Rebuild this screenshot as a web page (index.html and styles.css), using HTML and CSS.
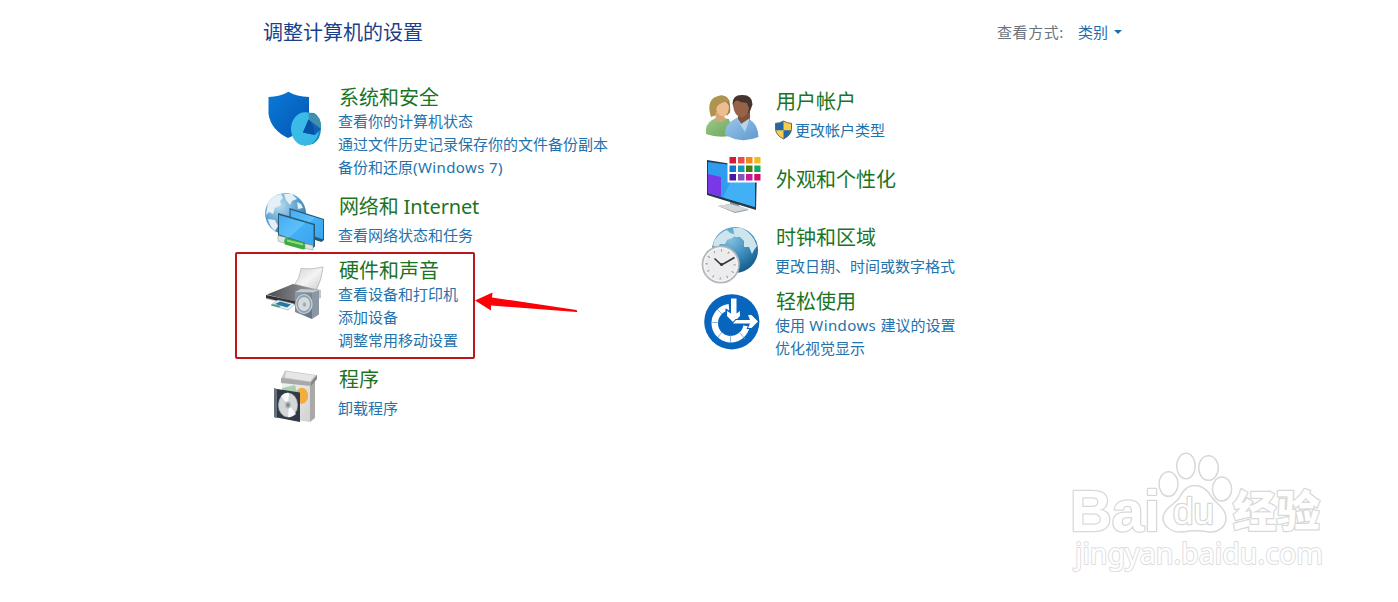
FILE: index.html
```html
<!DOCTYPE html>
<html lang="zh-CN">
<head>
<meta charset="utf-8">
<title>控制面板</title>
<link rel="stylesheet" href="styles.css">
</head>
<body>
<main class="panel">
  <header class="panel-head">
    <h1 class="title">调整计算机的设置</h1>
    <div class="view"><span class="view-label">查看方式:</span><a class="view-value">类别</a><i class="caret"></i></div>
  </header>
  <div class="columns">
    <div class="column column-left">
      <section class="item item-tall">
        <svg class="icon" viewBox="262 84 64 64">
          <defs>
            <linearGradient id="shield" x1="0" y1="0" x2="1" y2="1"><stop offset="0" stop-color="#087bd5"/><stop offset="1" stop-color="#0654b5"/></linearGradient>
            <linearGradient id="pie" x1="0" y1="0" x2="1" y2="1"><stop offset="0" stop-color="#3cbce9"/><stop offset="1" stop-color="#35b6e3"/></linearGradient>
          </defs>
          <path d="M268.500 97q12-.5 20-5.300q8 5 20.500 5.300v16q-1 17-21 25q-17-8-19.500-24z" fill="url(#shield)"/>
          <path d="M306 112.500l8 .5q7 3.500 7 15t-8 16l-9 1.500z" fill="#168bbb"/>
          <ellipse cx="305" cy="129" rx="14" ry="16.700" fill="url(#pie)"/>
          <path d="M308.500 112.800q9 1 12 9l.5 8-12-8.500z" fill="#3f8fae"/>
          <path d="M308.500 119.500l-5.500 13 12 2.500 6-6z" fill="#0f62b0"/>
          <path d="M308.500 119.500l-5.500 13 11 2.300q1-9-5.500-15.300z" fill="#0751a9"/>
        </svg>
        <div class="text"><h2>系统和安全</h2><a>查看你的计算机状态</a><a>通过文件历史记录保存你的文件备份副本</a><a>备份和还原<span class="latin">(Windows 7)</span></a></div>
      </section>
      <section class="item item-net">
        <svg class="icon" viewBox="262 193 64 64">
          <defs>
            <radialGradient id="globe" cx=".35" cy=".3" r=".8"><stop offset="0" stop-color="#b9dcef"/><stop offset=".5" stop-color="#65a8d3"/><stop offset="1" stop-color="#226ea9"/></radialGradient>
            <linearGradient id="screen" x1="0" y1="0" x2="1" y2="1"><stop offset="0" stop-color="#45adf1"/><stop offset=".5" stop-color="#5cc0fa"/><stop offset=".52" stop-color="#43aff4"/><stop offset="1" stop-color="#3aa6f0"/></linearGradient>
          </defs>
          <circle cx="285.500" cy="213.500" r="20.500" fill="url(#globe)"/>
          <g fill="#e4f0f5"><path d="M268 203q5-8 13-9l2 4-3 3 1 4-6 3-2 6-4-2-3 3z"/><path d="M284 194l8 0 5 5-5 2-2 4-4-5z"/><path d="M268 219l7 1 3 6-3 5q-6-5-7-12z"/><path d="M297 202l4 2 2 4-5 1z"/></g>
          <path d="M289.500 208l34.500 11v21l-2.500 2-32-10z" fill="#2a5877"/>
          <path d="M290.500 209.800l32.500 10v19.500l-32-10z" fill="url(#screen)"/>
          <path d="M278 213l37 11v22.500l-2 1.500-35-12z" fill="#2a5877"/>
          <path d="M279 215l34.500 10v20.500l-34.500-11z" fill="url(#screen)"/>
          <path d="M278 235.500l10 2.500 0 6.500-10-3.500z" fill="#dce5e2" stroke="#96a49c" stroke-width=".6"/>
          <path d="M286 237.500l18 5q3 3 1 6.500l-2 .5-18-5q-2-4 1-7z" fill="#3eaa45"/>
          <path d="M287 239.500l16 4v2l-16-4z" fill="#91df7c"/>
          <path d="M305 243.500l8 2v4.500l-8-1.500z" fill="#dce5e2" stroke="#96a49c" stroke-width=".6"/>
        </svg>
        <div class="text text-wide"><h2>网络和 Internet</h2><a>查看网络状态和任务</a></div>
      </section>
      <section class="item item-tall">
        <svg class="icon" viewBox="262 257 64 64">
          <defs>
            <linearGradient id="paper" x1="0" y1="0" x2="1" y2="1"><stop offset="0" stop-color="#d2d3d5"/><stop offset=".5" stop-color="#f4f4f4"/><stop offset="1" stop-color="#c8c9cb"/></linearGradient>
            <linearGradient id="body" x1="0" y1="0" x2="1" y2="0"><stop offset="0" stop-color="#4a4c50"/><stop offset=".5" stop-color="#77797d"/><stop offset="1" stop-color="#a2a4a7"/></linearGradient>
            <linearGradient id="speaker" x1="0" y1="0" x2="1" y2="1"><stop offset="0" stop-color="#8d9dac"/><stop offset="1" stop-color="#5e7082"/></linearGradient>
          </defs>
          <path d="M301 268.500q11 1.500 22-1.500-1 12-7 24l-21-7q5-6 6-15.500z" fill="url(#paper)" stroke="#b4b5b8" stroke-width=".8"/>
          <path d="M266 296l27-12 28 6v8l-24 8-31-7z" fill="#c3c5c8"/>
          <path d="M267 294.500l26-10.500 26 6-22 12z" fill="url(#body)"/>
          <path d="M266 295l30 6.500v3.500l-30-7z" fill="#303237"/>
          <path d="M278 300l17 4-7 6-17-5z" fill="#edf5f7" stroke="#8093a1" stroke-width=".5"/>
          <path d="M280 301.500l11 3-4 3-12-3.500z" fill="#2778a9"/><path d="M273 304l8 2-2 1.500-8-2z" fill="#46a477"/>
          <path d="M295 292h18l-1 27-17-7z" fill="url(#speaker)"/>
          <path d="M312 292l7-2v24.500l-7 4.500z" fill="#8b98a4"/><path d="M295 292l6-3 18 1-6 2.500z" fill="#c3cbd2"/>
          <ellipse cx="304" cy="304" rx="8" ry="9.500" fill="#8e9fab" stroke="#cbd3d7" stroke-width="1.200"/>
          <ellipse cx="304" cy="304" rx="6" ry="7" fill="#d5dadc"/><ellipse cx="304.500" cy="304.500" rx="1.700" ry="2.200" fill="#a0adb5"/>
        </svg>
        <div class="text"><h2>硬件和声音</h2><a>查看设备和打印机</a><a>添加设备</a><a>调整常用移动设置</a></div>
      </section>
      <section class="item">
        <svg class="icon" viewBox="262 366 64 64">
          <defs><linearGradient id="box" x1="0" y1="0" x2="1" y2="1"><stop offset="0" stop-color="#f2f2f2"/><stop offset="1" stop-color="#d2d1d0"/></linearGradient></defs>
          <path d="M282 382l28 3v37l-28-4z" fill="url(#box)"/>
          <path d="M310 385l5-7v40l-5 4z" fill="#aaa9a8"/>
          <path d="M281 379l4-8.500 31 4.500-5 9z" fill="#c6c6c7"/><path d="M286 371.500l29 4-5 6-25-4z" fill="#e6e6e6"/>
          <path d="M281 378l30 4v4l-30-3z" fill="#a9a9aa"/><path d="M311 382l6-7.500v4.500l-6 7z" fill="#858586"/>
          <path d="M282 388l13-3 4 15-2 19-14-5z" fill="#a9ceb2"/>
          <ellipse cx="301.800" cy="395.800" rx="6.300" ry="8" fill="#f3ac3f"/>
          <path d="M274 388.500l26 4v29.500l-26-5z" fill="#303945"/><path d="M274 388.500l3 .5v29l-3-1z" fill="#66717b"/>
          <ellipse cx="288" cy="405" rx="9.600" ry="12" fill="#d3d7d8" stroke="#a8b0b4" stroke-width=".6"/>
          <path d="M288 405l-7-9q4-4 8-3zM289 405l7 9q-4 4-8 3z" fill="#fff" opacity=".85"/>
          <ellipse cx="288" cy="405" rx="2.800" ry="3.400" fill="#a9b1b4"/><ellipse cx="288" cy="405" rx="1.200" ry="1.500" fill="#6f7b82"/>
        </svg>
        <div class="text text-wide"><h2>程序</h2><a>卸载程序</a></div>
      </section>
    </div>
    <div class="column column-right">
      <section class="item item-user">
        <svg class="icon" viewBox="700 88 64 64">
          <defs>
            <linearGradient id="green" x1="0" y1="0" x2="1" y2="1"><stop offset="0" stop-color="#a0ca80"/><stop offset="1" stop-color="#67a565"/></linearGradient>
            <linearGradient id="blue" x1="0" y1="0" x2="1" y2="1"><stop offset="0" stop-color="#9dc9eb"/><stop offset="1" stop-color="#5f99ce"/></linearGradient>
          </defs>
          <path d="M706 134q-1-10 6-14l6-3 11 2 5 16q-14 4-28-1z" fill="url(#green)"/>
          <path d="M712 116q-1-20 10-20.500q9.500 1 8 17l-3 3-6-2z" fill="#98803f"/>
          <path d="M715 112h9l1 8q-4 4-9 0z" fill="#d8a574"/>
          <path d="M715 107q1-6 8-7 6 3 6 8-1 8-6 8.500-6-1-8-9.500z" fill="#edbd91"/>
          <path d="M711 117q-6-19 9-21.500 7-1 10 6-9 0-13 5l-2 9z" fill="#af9450"/>
          <path d="M725 135q0-11 8-15l7-4 9 3q9 5 9.500 18q-12 5-24 2z" fill="url(#blue)"/>
          <path d="M738 112h12v8l-8 5-4-6z" fill="#805238"/>
          <path d="M732.500 104q0-9 9-9q11-.5 11 9.500l-3 8-12 2z" fill="#47352d"/>
          <path d="M733 105q1-4 4-4.500 4 2 10 2.500l2 5q-1 8-7 9.500q-8-1-9-12.500z" fill="#966248"/>
          <path d="M737 119l4 5 9-6-5 14z" fill="#b3d5ee"/>
        </svg>
        <div class="text text-wide"><h2>用户帐户</h2><a class="shielded"><svg class="shield" viewBox="0 0 19 20"><path d="M9.500 1q4 2.500 8 2.300v6q-.5 6-8 9.700q-7.500-3.700-8-9.700v-6q4 .2 8-2.300z" fill="#f9cd47"/><path d="M9.500 1q-4 2.500-8 2.300v6l.2 1h7.800zM9.500 10.300h7.800q-1 5.700-7.800 8.700z" fill="#2369aa"/><path d="M9.500 1q4 2.500 8 2.300v6q-.5 6-8 9.700q-7.500-3.700-8-9.700v-6q4 .2 8-2.300z" fill="none" stroke="#6a6a60"/></svg>更改帐户类型</a></div>
      </section>
      <section class="item item-look">
        <svg class="icon" viewBox="700 167 64 64">
          <path d="M718 206l12-2v-5l9 3v4l10 4-14 3z" fill="#8f989f"/><path d="M718 206l12-2 19 5-14 3z" fill="#d4d8db"/>
          <path d="M707 160l50 8-1 42-49-15z" fill="#263a49"/>
          <path d="M708 162l47 6v39l-47-14z" fill="#2f9cef"/><path d="M738 166l17 2v39l-32-9.500z" fill="#42b0f5"/>
          <path d="M708 174l13 3v19.500l-13-3.500z" fill="#7937e8"/>
          <path d="M727.500 155h34.500v27.500h-34.500z" fill="#fff"/>
          <g><path d="M729.500 157h6.500v6.500h-6.500z" fill="#d11d36"/><path d="M738 157h6.500v6.500H738z" fill="#e74c50"/><path d="M746 157h6.500v6.500H746z" fill="#ee891c"/><path d="M754.300 157h6.200v6.500h-6.200z" fill="#f3bc19"/><path d="M729.500 165.500h6.500v6.500h-6.500z" fill="#0e78cf"/><path d="M738 165.500h6.500v6.500H738z" fill="#1797b3"/><path d="M746 165.500h6.500v6.500H746z" fill="#477d0b"/><path d="M754.300 165.500h6.200v6.500h-6.200z" fill="#13a866"/><path d="M729.500 174h6.500v6.500h-6.500z" fill="#4d16a0"/><path d="M738 174h6.500v6.500H738z" fill="#8455bd"/><path d="M746 174h6.500v6.500H746z" fill="#c61896"/><path d="M754.300 174h6.200v6.500h-6.200z" fill="#d30d65"/></g>
        </svg>
        <div class="text"><h2>外观和个性化</h2></div>
      </section>
      <section class="item item-clock">
        <svg class="icon" viewBox="700 224 64 64">
          <defs><radialGradient id="earth" cx=".4" cy=".25" r=".8"><stop offset="0" stop-color="#87c2df"/><stop offset=".5" stop-color="#3f90bf"/><stop offset="1" stop-color="#105687"/></radialGradient></defs>
          <circle cx="735" cy="250" r="23" fill="url(#earth)"/>
          <g fill="#cfe5ee"><path d="M714 241q6-9 13-11l3 3 6 2-4 3-5 2-2 4-5 0-2 3-5-1z"/><path d="M733 228l8 0q8 3 13 11l3 7-3 4-2 4-3-7-5 0 0-6-4-4-5 0z"/></g>
          <circle cx="720.700" cy="264.500" r="18.200" fill="#ececef" stroke="#b4b6b9" stroke-width="1.700"/>
          <circle cx="720.700" cy="264.500" r="16.500" fill="none" stroke="#f8f8f8"/>
          <circle cx="720.700" cy="264.500" r="14" fill="none" stroke="#888" stroke-width="2.500" stroke-dasharray=".8 6.530"/>
          <path d="M714.500 258.500l7 6.500 13-7.500" fill="none" stroke="#30363a" stroke-width="1.600"/><circle cx="721.500" cy="264.500" r="1.400" fill="#333"/>
        </svg>
        <div class="text text-wide"><h2>时钟和区域</h2><a>更改日期、时间或数字格式</a></div>
      </section>
      <section class="item">
        <svg class="icon" viewBox="700 288 64 64">
          <circle cx="731.800" cy="321.800" r="27.600" fill="#0865bd"/>
          <path d="M729 307.300A16 16 0 1 0 746.500 326" fill="none" stroke="#fff" stroke-width="6.500"/>
          <g stroke="#6aa2d6" stroke-width=".8"><path d="M717 309l5 5M711.500 322.500h7M718 337l4-5M730.500 335v8M740 333l5 6"/></g>
          <path d="M731 298.500h5.500v15l3.500-2.500v5l-6.500 6.500-6.500-6.500v-5l4 2.500z" fill="#fff" stroke="#0865bd" stroke-width="3" paint-order="stroke"/>
          <path d="M736 320h14l-2-5h3.500l6.500 6.500-6.500 6.500h-3.500l2-4.500h-17z" fill="#fff" stroke="#0865bd" stroke-width="2" paint-order="stroke"/>
        </svg>
        <div class="text"><h2>轻松使用</h2><a>使用<span class="latin"> Windows </span>建议的设置</a><a>优化视觉显示</a></div>
      </section>
    </div>
  </div>
</main>
<div class="highlight"></div>
<svg class="arrow" viewBox="474 290 106 25"><path d="M475 300.500l17.500-8-.5 5 84.500 12.500 1 1.500-1 .5-85.500-6.500v5z" fill="#fb0007"/></svg>
<svg class="watermark" viewBox="1066 445 264 135">
  <g class="outline">
    <text class="wm-brand" x="1070" y="531" textLength="90" lengthAdjust="spacingAndGlyphs">Bai</text>
    <ellipse cx="1168.500" cy="484" rx="9.500" ry="12.300"/><ellipse cx="1186" cy="466" rx="9.300" ry="12.800"/><ellipse cx="1208.500" cy="468" rx="9.800" ry="12.300"/><ellipse cx="1222" cy="489" rx="9.600" ry="12"/>
    <path d="M1195 485.500c8 0 13 5 17 12c4 6 14 11 14 20c0 10-8 15-17 14.500c-9-1.500-18-1.500-26 0c-10 1-20-5-20-14c0-9 11-13 16-20c4-7 8-12.500 16-12.500z"/>
    <text class="wm-du" x="1173" y="524" textLength="41" lengthAdjust="spacingAndGlyphs">du</text>
    <text class="wm-cn" x="1233" y="527" textLength="87" lengthAdjust="spacingAndGlyphs">经验</text>
    <text class="wm-url" x="1075" y="564" textLength="248" lengthAdjust="spacingAndGlyphs">jingyan.baidu.com</text>
  </g>
</svg>
</body>
</html>
```
FILE: styles.css
```css
body {
  margin: 0;
  width: 1398px;
  height: 602px;
  position: relative;
  overflow: hidden;
  background: #fff;
  font-family: "Noto Sans", "Noto Sans CJK SC", sans-serif;
}
.panel { padding: 18px 276px 0 262px; }
.panel-head {
  display: flex;
  justify-content: space-between;
  height: 66px;
}
.title {
  margin: 1px 0 0 1px;
  font-size: 20px;
  line-height: 28px;
  font-weight: 400;
  color: #1b4088;
}
.view {
  display: flex;
  align-items: center;
  height: 27px;
  font-size: 15px;
}
.view-label { color: #6b737c; margin-right: 14px; letter-spacing: .6px; }
.view-value { color: #1c6cab; }
.caret {
  margin-left: 6px;
  border: 4px solid transparent;
  border-top-color: #1c6cab;
  border-bottom: 0;
}
.columns { display: grid; grid-template-columns: 438px 1fr; }
.column-right { padding-top: 4px; }
.column-right .text { margin-left: -1px; }
.item { display: flex; gap: 12px; }
.item-tall { height: 109px; }
.item-net { height: 64px; }
.item-user { height: 79px; }
.item-look { height: 57px; }
.item-clock { height: 64px; }
.icon { width: 64px; height: 64px; overflow: visible; flex: none; }
.text { display: flex; flex-direction: column; white-space: nowrap; }
.text h2 {
  margin: 0;
  padding: 1px 0 0 1px;
  font-size: 20px;
  line-height: 25px;
  font-weight: 400;
  color: #1b741f;
}
.item-look h2 { padding-top: 0; }
.item-net h2 { letter-spacing: -.15px; }
.text a {
  font-size: 15px;
  line-height: 23px;
  color: #2472ac;
}
.latin { letter-spacing: .4px; }
.text-wide h2 { margin-bottom: 5px; }
.text .shielded { display: flex; align-items: center; }
.shield { width: 19px; height: 20px; margin: -2px 2px 0 -1px; }
.highlight {
  position: absolute;
  left: 235px;
  top: 252px;
  width: 236px;
  height: 103px;
  border: 2px solid #bd151c;
  border-radius: 2px;
}
.arrow { position: absolute; left: 474px; top: 290px; width: 106px; height: 25px; }
.watermark { position: absolute; left: 1066px; top: 445px; width: 264px; height: 135px; }
.outline { fill: #fff; stroke: #d8d8d8; stroke-width: 1.5; }
.outline text { paint-order: stroke; stroke-width: 2.5; stroke-linejoin: round; }
.wm-brand { font: bold 57px "Liberation Sans", sans-serif; }
.wm-du { font: 36px "Liberation Sans", sans-serif; }
.wm-cn { font: 900 43px "Noto Sans CJK SC", sans-serif; }
.outline .wm-url { font: 29px "Noto Sans", sans-serif; stroke: #dedede; stroke-width: 2; }
```
